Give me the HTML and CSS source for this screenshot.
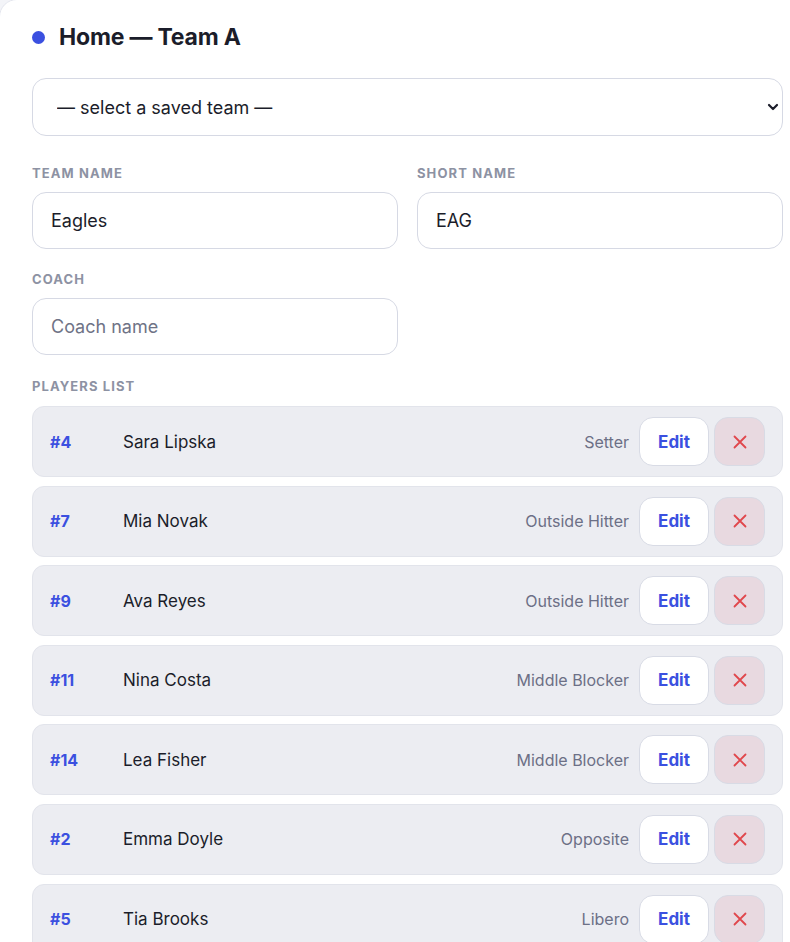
FILE: index.html
```html
<!doctype html>
<html>
<head>
  <title>Team setup</title>
  <link rel="stylesheet" href="styles.css">
</head>
<body>
  <div class="card">
    <h1 class="team-title"><span class="dot"></span>Home — Team A</h1>

    <div class="select-wrap">
      <select class="field select">
        <option>— select a saved team —</option>
      </select>
      <svg class="chevron" width="14" height="14" viewBox="0 0 14 14"><path d="M3 5l4 4 4-4" fill="none" stroke="#1b1d2a" stroke-width="2.2" stroke-linecap="round" stroke-linejoin="round"/></svg>
    </div>

    <div class="grid">
      <div class="group">
        <label class="label">Team name</label>
        <input class="field" type="text" value="Eagles">
      </div>
      <div class="group">
        <label class="label">Short name</label>
        <input class="field" type="text" value="EAG">
      </div>
      <div class="group">
        <label class="label">Coach</label>
        <input class="field" type="text" placeholder="Coach name">
      </div>
    </div>

    <div class="label players-label">Players list</div>
    <ul class="players">
      <li class="player"><span class="num">#4</span><span class="name">Sara Lipska</span><span class="pos">Setter</span><button class="btn edit">Edit</button><button class="btn del"><svg width="16" height="16" viewBox="0 0 16 16"><path d="M2.5 2.5l11 11M13.5 2.5l-11 11" stroke="#e0474c" stroke-width="1.8" stroke-linecap="round"/></svg></button></li>
      <li class="player"><span class="num">#7</span><span class="name">Mia Novak</span><span class="pos">Outside Hitter</span><button class="btn edit">Edit</button><button class="btn del"><svg width="16" height="16" viewBox="0 0 16 16"><path d="M2.5 2.5l11 11M13.5 2.5l-11 11" stroke="#e0474c" stroke-width="1.8" stroke-linecap="round"/></svg></button></li>
      <li class="player"><span class="num">#9</span><span class="name">Ava Reyes</span><span class="pos">Outside Hitter</span><button class="btn edit">Edit</button><button class="btn del"><svg width="16" height="16" viewBox="0 0 16 16"><path d="M2.5 2.5l11 11M13.5 2.5l-11 11" stroke="#e0474c" stroke-width="1.8" stroke-linecap="round"/></svg></button></li>
      <li class="player"><span class="num">#11</span><span class="name">Nina Costa</span><span class="pos">Middle Blocker</span><button class="btn edit">Edit</button><button class="btn del"><svg width="16" height="16" viewBox="0 0 16 16"><path d="M2.5 2.5l11 11M13.5 2.5l-11 11" stroke="#e0474c" stroke-width="1.8" stroke-linecap="round"/></svg></button></li>
      <li class="player"><span class="num">#14</span><span class="name">Lea Fisher</span><span class="pos">Middle Blocker</span><button class="btn edit">Edit</button><button class="btn del"><svg width="16" height="16" viewBox="0 0 16 16"><path d="M2.5 2.5l11 11M13.5 2.5l-11 11" stroke="#e0474c" stroke-width="1.8" stroke-linecap="round"/></svg></button></li>
      <li class="player"><span class="num">#2</span><span class="name">Emma Doyle</span><span class="pos">Opposite</span><button class="btn edit">Edit</button><button class="btn del"><svg width="16" height="16" viewBox="0 0 16 16"><path d="M2.5 2.5l11 11M13.5 2.5l-11 11" stroke="#e0474c" stroke-width="1.8" stroke-linecap="round"/></svg></button></li>
      <li class="player"><span class="num">#5</span><span class="name">Tia Brooks</span><span class="pos">Libero</span><button class="btn edit">Edit</button><button class="btn del"><svg width="16" height="16" viewBox="0 0 16 16"><path d="M2.5 2.5l11 11M13.5 2.5l-11 11" stroke="#e0474c" stroke-width="1.8" stroke-linecap="round"/></svg></button></li>
    </ul>
  </div>
</body>
</html>
```

FILE: styles.css
```css
html, body {
  margin: 0;
  overflow: hidden;
  background: #f3f4f8;
}

body {
  font-family: Inter, "Noto Sans", sans-serif;
  color: #1b1d2a;
}

.card {
  box-sizing: border-box;
  width: 821px;
  min-height: 1000px;
  margin: -1px 0 0 -1px;
  padding: 23px 36px 0 32px;
  background: #fff;
  border: 1px solid #e4e6ee;
  border-radius: 18px;
}

/* heading */
.team-title {
  display: flex;
  align-items: center;
  gap: 14px;
  margin: 0 0 27px;
  font-size: 23px;
  font-weight: 700;
  letter-spacing: -0.2px;
  line-height: 28px;
}
.dot {
  width: 13px;
  height: 13px;
  border-radius: 50%;
  background: #3b50e0;
}

/* fields */
.field {
  box-sizing: border-box;
  width: 100%;
  height: 58px;
  padding: 0 18px;
  border: 1px solid #d6d9e4;
  border-radius: 14px;
  background: #fff;
  font-family: inherit;
  font-size: 18px;
  color: #1b1d2a;
  outline: none;
}
.field::placeholder {
  color: #6f7386;
}

.select-wrap {
  position: relative;
}
.select {
  -webkit-appearance: none;
  appearance: none;
  padding-left: 24px;
}
.chevron {
  position: absolute;
  right: 3px;
  top: 22px;
}

.grid {
  display: grid;
  grid-template-columns: 1fr 1fr;
  column-gap: 19px;
  row-gap: 22px;
  margin-top: 29px;
}
.group {
  display: flex;
  flex-direction: column;
  gap: 11px;
}
.group .field {
  height: 57px;
}

.label {
  font-size: 13px;
  font-weight: 700;
  line-height: 16px;
  letter-spacing: 1.1px;
  text-transform: uppercase;
  color: #8d92a3;
}
.players-label {
  margin: 23px 0 12px;
}

/* players */
.players {
  list-style: none;
  margin: 0;
  padding: 0;
  display: flex;
  flex-direction: column;
  gap: 8.6px;
}
.player {
  display: flex;
  align-items: center;
  padding: 10px 17px;
  background: #ecedf2;
  border: 1px solid #e2e4eb;
  border-radius: 12px;
}
.num {
  width: 73px;
  font-size: 16px;
  font-weight: 700;
  color: #3b50e0;
}
.name {
  flex: 1;
  font-size: 17px;
  color: #1b1d2a;
}
.pos {
  margin-right: 10px;
  font-size: 16px;
  color: #6c7086;
}
.btn {
  box-sizing: border-box;
  height: 49px;
  border: 1px solid #d8dbe5;
  border-radius: 14px;
  font-family: inherit;
  cursor: pointer;
}
.edit {
  width: 70px;
  background: #fff;
  font-size: 17px;
  font-weight: 700;
  color: #3b50e0;
}
.del {
  width: 51px;
  margin-left: 5px;
  display: flex;
  align-items: center;
  justify-content: center;
  background: #e8d9e0;
}
```
